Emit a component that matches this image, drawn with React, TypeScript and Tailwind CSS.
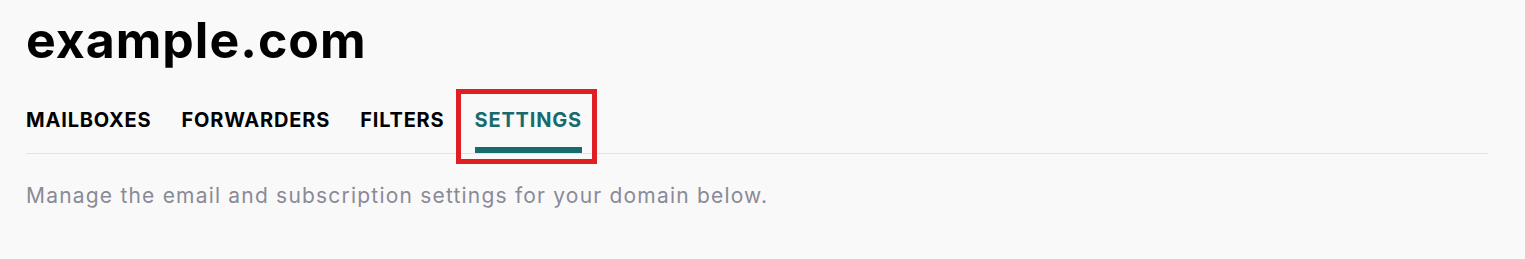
export default function App() {
  return (
    <div className="min-h-[259px] w-full bg-[#f9f9fa] pl-[26px] pr-[37px] pt-[10px]" style={{ fontFamily: 'Inter, "Liberation Sans", sans-serif' }}>
      <h1 className="text-[50px] font-bold leading-[60px] tracking-[1px] text-black">example.com</h1>
      <div className="flex h-[84px] items-stretch gap-[30px] border-b border-[#e2e3e7] text-[20px] font-bold leading-[24px] tracking-[0.82px]">
        <span className="pt-[38px] text-black">MAILBOXES</span>
        <span className="pt-[38px] text-black">FORWARDERS</span>
        <span className="pt-[38px] text-black">FILTERS</span>
        <div className="relative flex flex-col">
          <span className="pt-[38px] text-[#176b6e]">SETTINGS</span>
          <div className="mt-auto h-[6px] w-full bg-[#176b6e]" />
          <div className="pointer-events-none absolute -left-[19px] -right-[15px] top-[19px] -bottom-[11px] border-[5px] border-[#e01f24]" />
        </div>
      </div>
      <p className="mt-[28px] text-[21px] leading-[28px] tracking-[1.2px] text-[#8a8a97]">Manage the email and subscription settings for your domain below.</p>
    </div>
  );
}
